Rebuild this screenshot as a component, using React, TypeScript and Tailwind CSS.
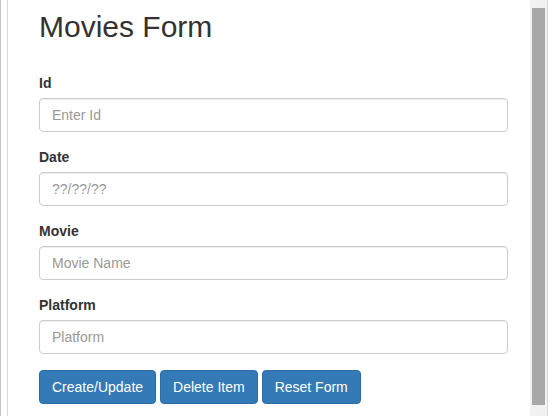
import React from "react";

const font = { fontFamily: '"Liberation Sans", Arial, Helvetica, sans-serif' };

function Field({ label, placeholder }: { label: string; placeholder: string }) {
  return (
    <div className="mb-[15px]">
      <label className="block text-[14px] leading-[20px] font-bold text-[#333] mb-[5px]">{label}</label>
      <input
        className="block w-full h-[34px] px-[12px] py-[6px] text-[14px] text-[#555] border border-[#ccc] rounded-[4px] bg-white placeholder:text-[#999] shadow-[inset_0_1px_1px_rgba(0,0,0,0.075)] outline-none"
        placeholder={placeholder}
      />
    </div>
  );
}

function Btn({ children }: { children: React.ReactNode }) {
  return (
    <button className="h-[34px] px-[12px] text-[14px] leading-[20px] text-white bg-[#337ab7] border border-[#2e6da4] rounded-[4px]">
      {children}
    </button>
  );
}

export default function App() {
  return (
    <div className="w-[553px] h-[416px] flex bg-white overflow-hidden" style={font}>
      <div className="w-[1px] h-full bg-[#c3c3c3]" />
      <div className="w-[6px] h-full bg-white" />
      <div className="w-[1px] h-full bg-[#d8d8d8]" />
      <div className="w-[522px] h-full pl-[31px]">
        <div className="w-[469px]">
          <h2 className="mt-[10px] mb-[30px] text-[30px] leading-[33px] font-normal text-[#333]">Movies Form</h2>
          <Field label="Id" placeholder="Enter Id" />
          <Field label="Date" placeholder="??/??/??" />
          <Field label="Movie" placeholder="Movie Name" />
          <Field label="Platform" placeholder="Platform" />
          <div className="flex gap-[4px] mt-[16px]">
            <Btn>Create/Update</Btn>
            <Btn>Delete Item</Btn>
            <Btn>Reset Form</Btn>
          </div>
        </div>
      </div>
      <div className="w-[17px] h-full bg-[#f1f1f1] pt-[8px] pl-[2px]">
        <div className="w-[13px] h-[397px] bg-[#a8a8a8]" />
      </div>
      <div className="w-[1px] h-full bg-[#dcdcdc]" />
      <div className="flex-1 h-full bg-white" />
    </div>
  );
}
